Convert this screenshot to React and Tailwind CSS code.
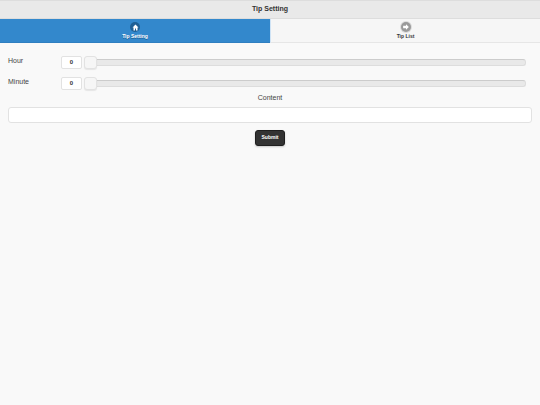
import React from 'react'

const SliderRow = ({ label }) => (
  <div className="flex h-[21px] items-start">
    <span className="w-[61px] pl-2 text-[7px] leading-[10px] text-[#444]">{label}</span>
    <div className="relative flex flex-1 items-center">
      <div className="flex h-[13px] w-[21px] items-center justify-center rounded-[2px] border border-[#e2e2e2] bg-white text-[6px] font-bold text-[#333]">
        0
      </div>
      <div className="ml-[2px] mr-[14px] h-[7px] flex-1 rounded-[3px] border border-[#ddd] border-t-[#ccc] bg-[#e9e9e9]" />
      <div className="absolute left-[23px] top-0 h-[13px] w-[13px] rounded-[3px] border border-[#e2e2e2] bg-[#f6f6f6] shadow-[0_1px_1px_rgba(0,0,0,0.08)]" />
    </div>
  </div>
)

const App = () => {
  return (
    <div className="flex h-[405px] w-[540px] flex-col overflow-hidden bg-[#f9f9f9] font-['Liberation_Sans',Arial,sans-serif]">
      {/* Header */}
      <header className="flex h-[19px] items-center justify-center border-y border-[#ddd] bg-[#e9e9e9] text-[7px] font-bold text-[#333]">
        Tip Setting
      </header>

      {/* Tabs */}
      <nav className="flex h-[24px]">
        <div className="flex w-[270px] flex-col items-center border-b border-[#2f7fc0] bg-[#3388cc] pt-[3px] text-white">
          <span className="flex h-[10px] w-[10px] items-center justify-center rounded-full bg-[#1f5f94]">
            <svg width="7" height="7" viewBox="0 0 14 14" fill="#fff">
              <path d="M7 1 L1 7 H3 V13 H6 V9 H8 V13 H11 V7 H13 Z" />
            </svg>
          </span>
          <span className="mt-[1px] text-[5px] font-bold leading-[7px] [text-shadow:0_1px_0_#1f5f94]">Tip Setting</span>
        </div>
        <div className="flex w-[270px] flex-col items-center border-b border-l border-b-[#e6e6e6] border-l-[#cfe3f5] bg-[#f6f6f6] pt-[3px] text-[#333]">
          <span className="flex h-[10px] w-[10px] items-center justify-center rounded-full bg-[#9a9a9a] ring-1 ring-[#dcdcdc]">
            <svg width="8" height="8" viewBox="0 0 14 14" fill="#fff">
              <path d="M7 2 L12 7 L7 12 V9 H2 V5 H7 Z" />
            </svg>
          </span>
          <span className="mt-[1px] text-[5px] font-bold leading-[7px]">Tip List</span>
        </div>
      </nav>

      {/* Form */}
      <main className="flex flex-col pt-[13px]">
        <SliderRow label="Hour" />
        <SliderRow label="Minute" />
        <p className="-mt-[5px] text-center text-[7px] leading-[10px] text-[#444]">Content</p>
        <input
          className="mx-2 mt-[4px] h-[16px] w-[524px] rounded-[3px] border border-[#e2e2e2] bg-white"
          type="text"
          aria-label="Content"
        />
        <div className="mt-[7px] flex justify-center">
          <button className="h-[16px] w-[30px] rounded-[3px] border border-[#1f1f1f] bg-[#333] text-[5px] font-bold text-white shadow-[0_1px_2px_rgba(0,0,0,0.2)]">
            Submit
          </button>
        </div>
      </main>
    </div>
  )
}

export default App
